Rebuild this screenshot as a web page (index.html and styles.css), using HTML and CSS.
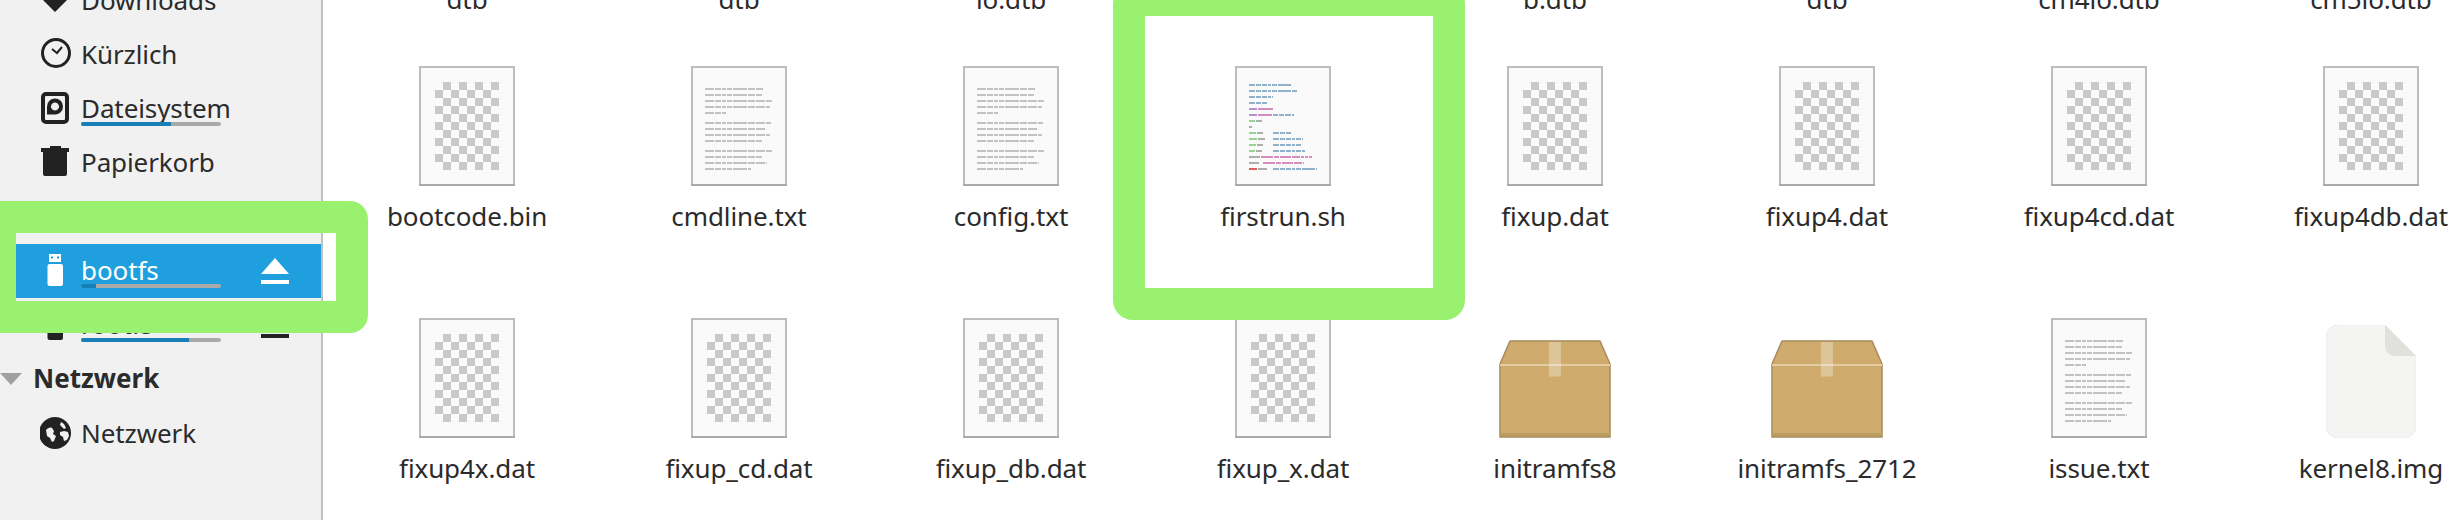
FILE: index.html
```html
<!DOCTYPE html>
<html lang="de">
<head>
<meta charset="utf-8">
<title>bootfs</title>
<link rel="stylesheet" href="styles.css">
</head>
<body>
<svg class="defs" aria-hidden="true">
  <defs>
    <pattern id="chk" width="16" height="16" patternUnits="userSpaceOnUse" x="16" y="16">
      <rect x="8" y="0" width="8" height="8" fill="#c9c9c9"/>
      <rect x="0" y="8" width="8" height="8" fill="#c9c9c9"/>
    </pattern>
  </defs>
  <symbol id="doc-frame" viewBox="0 0 96 120">
    <rect x="1" y="1" width="94" height="118" fill="#fafafa" stroke="#bdbdbd" stroke-width="2"/>
    <rect x="0" y="118" width="96" height="2" fill="#aaaaaa"/>
  </symbol>
  <symbol id="image" viewBox="0 0 96 120">
    <use href="#doc-frame" width="96" height="120"/>
    <rect x="16" y="16" width="64" height="88" fill="url(#chk)"/>
  </symbol>
  <symbol id="text" viewBox="0 0 96 120">
    <use href="#doc-frame" width="96" height="120"/>
    <g stroke="#c2c2c2" stroke-width="2" stroke-dasharray="9 1 6 1 4 1 5 1 14 1 7 1">
      <path d="M14 23h58M14 29h57M14 35h67M14 41h65M14 47h21"/>
      <path d="M14 57h66M14 63h60M14 69h65M14 75h57"/>
      <path d="M14 85h67M14 91h57M14 97h62M14 103h46"/>
    </g>
  </symbol>
  <symbol id="script" viewBox="0 0 96 120">
    <use href="#doc-frame" width="96" height="120"/>
    <g stroke-width="2" fill="none">
      <g stroke="#8fb2ca" stroke-dasharray="6 1 5 1 5 1 3 1 5 1 13 1">
        <path d="M14 19h43M14 25h48M14 31h24M14 37h19"/>
        <path d="M38 67h19M38 73h30M38 79h28M38 85h32M38 103h44"/>
      </g>
      <g stroke="#b490d4"><path d="M14 43h8M14 49h8"/></g>
      <g stroke="#d48fbc"><path d="M23 43h15M23 49h14"/></g>
      <path d="M38 49h21" stroke="#8fb2ca" stroke-dasharray="5 1 5 1 6 1"/>
      <g stroke="#93d693"><path d="M14 55h6M14 67h7M14 73h8M14 79h7M14 85h6"/></g>
      <g stroke="#adadad"><path d="M21 55h6M14 61h3M22 67h6M23 73h7M22 79h6M21 85h6M14 91h11M14 97h10M23 103h9"/></g>
      <g stroke="#d48fbc" stroke-dasharray="12 1 5 1 11 1 8 1 3 1 3 1 3 1"><path d="M26 91h52M28 97h41"/></g>
      <path d="M14 103h8" stroke="#e06060"/>
    </g>
  </symbol>
  <symbol id="package" viewBox="0 0 112 98">
    <path d="M11 1H101L111 24V97H1V24Z" fill="#cfac6d" stroke="#a68a5b" stroke-width="1.5" stroke-linejoin="round"/>
    <rect x="1" y="24" width="110" height="2" fill="#e3cc9f"/>
    <rect x="1" y="93" width="110" height="3" fill="#bd9d62"/>
    <path d="M50 2H62V36L60 37 58 36 56 37 54 36 52 37 50 36Z" fill="#fff" fill-opacity=".3"/>
  </symbol>
  <symbol id="blob" viewBox="0 0 90 113">
    <path d="M12 0H59L90 31V101A12 12 0 0 1 78 113H12A12 12 0 0 1 0 101V12A12 12 0 0 1 12 0Z" fill="#f4f4f3" stroke="#ececea" stroke-width="1"/>
    <path d="M59 0L90 31V31H69A10 10 0 0 1 59 21Z" fill="#e0e0dd"/>
  </symbol>
  <symbol id="usb" viewBox="0 0 32 36">
    <path d="M9 1H21V9H9ZM11 3.500V5.500H13V3.500ZM17 3.500V5.500H19V3.500Z" fill-rule="evenodd"/>
    <rect x="7.500" y="11" width="15.500" height="22" rx="2"/>
  </symbol>
  <symbol id="eject" viewBox="0 0 28 28">
    <path d="M14 1L28 17H0ZM0 23H28V27H0Z"/>
  </symbol>
</svg>

<div class="window">
  <aside class="sidebar">
    <div class="row">
      <svg class="ico" viewBox="0 0 32 32"><path d="M9 2H21V16H27L15 28 3 16H9Z"/></svg>
      <span class="name">Downloads</span>
    </div>
    <div class="row">
      <svg class="ico" viewBox="0 0 32 32"><circle cx="16" cy="15" r="13.500" fill="none" stroke="#222" stroke-width="3"/><path d="M12 11L17 15 22 9" fill="none" stroke="#222" stroke-width="2"/></svg>
      <span class="name">Kürzlich</span>
    </div>
    <div class="row">
      <svg class="ico" viewBox="0 0 32 32"><rect x="3" y="2" width="24" height="28" rx="3" fill="none" stroke="#222" stroke-width="4"/><path d="M7 14.500A8 8 0 1 1 15 22.500H7ZM15 10.500a4 4 0 1 0 .01 0Z" fill-rule="evenodd"/></svg>
      <span class="name">Dateisystem</span>
      <span class="bar bar-high"><i style="width:64%"></i></span>
    </div>
    <div class="row">
      <svg class="ico" viewBox="0 0 32 32"><path d="M10 0H21V2H29V6H1V2H10ZM3 6H27V28A2 2 0 0 1 25 30H5A2 2 0 0 1 3 28Z"/></svg>
      <span class="name">Papierkorb</span>
    </div>

    <div class="row mounted selected">
      <svg class="ico ico-tall"><use href="#usb"/></svg>
      <span class="name">bootfs</span>
      <span class="bar"><i style="width:11%"></i></span>
      <svg class="eject"><use href="#eject"/></svg>
    </div>
    <div class="row mounted">
      <svg class="ico ico-tall"><use href="#usb"/></svg>
      <span class="name">rootfs</span>
      <span class="bar"><i style="width:77%"></i></span>
      <svg class="eject"><use href="#eject"/></svg>
    </div>

    <div class="heading">
      <span class="arrow"></span>
      <span class="heading-text">Netzwerk</span>
    </div>
    <div class="row">
      <svg class="ico" viewBox="0 0 32 32">
        <circle cx="15" cy="16" r="16"/>
        <path d="M6 13c2-2 4-3 6-2l2 3-1 3 3 2-2 5-2 1-2-4-3-2zM21 5l3 2 2 4-2 1-2-2-2-2zM20 15l4-1 4 1 1 4-2 4-3 1-1-4-3-2z" fill="#f1f1f1"/>
      </svg>
      <span class="name">Netzwerk</span>
    </div>
  </aside>

  <main class="files">
    <div class="file tail"><span class="label">dtb</span></div>
    <div class="file tail"><span class="label">dtb</span></div>
    <div class="file tail"><span class="label">io.dtb</span></div>
    <div class="file tail"></div>
    <div class="file tail"><span class="label">b.dtb</span></div>
    <div class="file tail"><span class="label">dtb</span></div>
    <div class="file tail"><span class="label">cm4io.dtb</span></div>
    <div class="file tail"><span class="label">cm5io.dtb</span></div>

    <div class="file"><svg class="thumb"><use href="#image"/></svg><span class="label">bootcode.bin</span></div>
    <div class="file"><svg class="thumb"><use href="#text"/></svg><span class="label">cmdline.txt</span></div>
    <div class="file"><svg class="thumb"><use href="#text"/></svg><span class="label">config.txt</span></div>
    <div class="file"><svg class="thumb"><use href="#script"/></svg><span class="label">firstrun.sh</span></div>
    <div class="file"><svg class="thumb"><use href="#image"/></svg><span class="label">fixup.dat</span></div>
    <div class="file"><svg class="thumb"><use href="#image"/></svg><span class="label">fixup4.dat</span></div>
    <div class="file"><svg class="thumb"><use href="#image"/></svg><span class="label">fixup4cd.dat</span></div>
    <div class="file"><svg class="thumb"><use href="#image"/></svg><span class="label">fixup4db.dat</span></div>

    <div class="file"><svg class="thumb"><use href="#image"/></svg><span class="label">fixup4x.dat</span></div>
    <div class="file"><svg class="thumb"><use href="#image"/></svg><span class="label">fixup_cd.dat</span></div>
    <div class="file"><svg class="thumb"><use href="#image"/></svg><span class="label">fixup_db.dat</span></div>
    <div class="file"><svg class="thumb"><use href="#image"/></svg><span class="label">fixup_x.dat</span></div>
    <div class="file"><svg class="thumb thumb-pkg"><use href="#package"/></svg><span class="label">initramfs8</span></div>
    <div class="file"><svg class="thumb thumb-pkg"><use href="#package"/></svg><span class="label">initramfs_2712</span></div>
    <div class="file"><svg class="thumb"><use href="#text"/></svg><span class="label">issue.txt</span></div>
    <div class="file"><svg class="thumb thumb-blob"><use href="#blob"/></svg><span class="label">kernel8.img</span></div>
  </main>
</div>

<div class="mark mark-side"></div>
<div class="mark mark-file"></div>
</body>
</html>
```

FILE: styles.css
```css
html, body {
  margin: 0;
  padding: 0;
  width: 2464px;
  height: 520px;
  overflow: hidden;
  background: #fff;
}

body {
  font-family: "Noto Sans", "Open Sans", sans-serif;
  font-size: 26px;
  color: #2b2b2b;
  position: relative;
}

.defs {
  position: absolute;
  width: 0;
  height: 0;
}

.window {
  display: flex;
  height: 520px;
}

/* sidebar */
.sidebar {
  flex: 0 0 321px;
  height: 547px;
  margin-top: -27px;
  background: #f1f1f1;
  border-right: 2px solid #c0c0c0;
  display: flex;
  flex-direction: column;
}

.row {
  position: relative;
  flex: 0 0 54px;
  display: flex;
  align-items: center;
  padding-left: 40px;
  box-sizing: border-box;
}

.ico {
  flex: 0 0 32px;
  width: 32px;
  height: 32px;
  margin-right: 9px;
  fill: #222;
}

.ico-tall {
  height: 36px;
}

.name {
  line-height: 32px;
  white-space: nowrap;
  letter-spacing: -0.1px;
}

.mounted .name {
  padding-bottom: 2px;
}

.bar {
  position: absolute;
  left: 81px;
  top: 40px;
  width: 140px;
  height: 4px;
  border-radius: 2px;
  background: #a9a9a9;
  overflow: hidden;
}

.bar-high {
  top: 41px;
}

.bar i {
  display: block;
  height: 100%;
  background: #187fb6;
}

.eject {
  position: absolute;
  left: 261px;
  top: 13px;
  width: 28px;
  height: 28px;
  fill: #222;
}

.selected {
  background: #1f9fde;
  color: #fff;
  margin-top: 55px;
}

.selected .ico,
.selected .eject {
  fill: #fff;
}

.heading {
  flex: 0 0 54px;
  display: flex;
  align-items: center;
  font-weight: 700;
}

.arrow {
  width: 0;
  height: 0;
  border-left: 11px solid transparent;
  border-right: 11px solid transparent;
  border-top: 12px solid #a0a0a0;
  margin-right: 11px;
}

.heading-text {
  line-height: 32px;
  padding-bottom: 2px;
}

/* file grid */
.files {
  flex: 1 1 auto;
  padding-left: 8px;
  display: grid;
  grid-template-columns: repeat(8, 272px);
  grid-template-rows: 58px 252px 252px;
  overflow: hidden;
}

.file {
  display: flex;
  flex-direction: column;
  align-items: center;
  padding-top: 8px;
  min-width: 0;
}

.file.tail {
  padding-top: 0;
  justify-content: flex-end;
  height: 58px;
  padding-bottom: 43px;
  box-sizing: border-box;
}

.thumb {
  flex: 0 0 auto;
  width: 96px;
  height: 120px;
}

.thumb-pkg {
  width: 112px;
  height: 98px;
  margin-top: 22px;
}

.thumb-blob {
  width: 90px;
  height: 113px;
  margin-top: 7px;
}

.label {
  margin-top: 14px;
  line-height: 32px;
  white-space: nowrap;
  text-align: center;
  letter-spacing: -0.1px;
}

.tail .label {
  margin-top: 0;
  flex: 0 0 auto;
}

/* green annotation frames */
.mark {
  position: absolute;
  box-sizing: border-box;
  border: 32px solid #9af170;
  pointer-events: none;
}

.mark-side {
  left: -16px;
  top: 201px;
  width: 384px;
  height: 132px;
  border-radius: 18px;
}

.mark-file {
  left: 1113px;
  top: -16px;
  width: 352px;
  height: 336px;
  border-radius: 20px;
}
```
